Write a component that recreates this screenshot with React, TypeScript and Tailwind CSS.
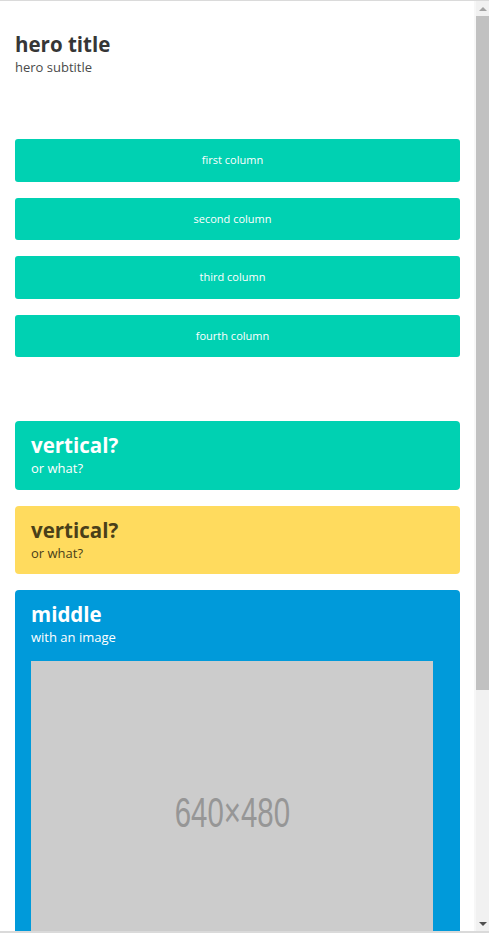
const font = { fontFamily: '"Open Sans", "Noto Sans", sans-serif' };

const columns = ["first column", "second column", "third column", "fourth column"];

function Tile({
  title,
  subtitle,
  className,
  children,
}: {
  title: string;
  subtitle: string;
  className: string;
  children?: React.ReactNode;
}) {
  return (
    <div className={`rounded-[4px] px-4 pt-[10px] pb-[16px] ${className}`}>
      <p className="text-[20.5px] font-bold leading-[28px]">{title}</p>
      <p className="text-[13px] leading-[18px]">{subtitle}</p>
      {children}
    </div>
  );
}

function Scrollbar() {
  return (
    <div className="flex w-[15px] flex-col border-l-2 border-[#f7f7f7] bg-[#f1f1f1]">
      <div className="flex h-[15px] items-center justify-center">
        <div className="h-0 w-0 border-x-[4px] border-b-[4px] border-x-transparent border-b-[#a3a3a3]" />
      </div>
      <div className="h-[674px] bg-[#c1c1c1]" />
      <div className="flex-1" />
      <div className="flex h-[15px] items-center justify-center">
        <div className="h-0 w-0 border-x-[4px] border-t-[4px] border-x-transparent border-t-[#505050]" />
      </div>
    </div>
  );
}

export default function App() {
  return (
    <div
      className="flex h-[933px] overflow-hidden border-t border-b-2 border-[#dadada] bg-white text-[#363636]"
      style={font}
    >
      <main className="flex-1 overflow-hidden pl-[15px] pr-[14px]">
        <section className="pt-[29px]">
          <h1 className="text-[20.5px] font-bold leading-[28px]">hero title</h1>
          <h2 className="text-[13px] leading-[18px] text-[#4a4a4a]">hero subtitle</h2>
        </section>

        <section className="mt-[63px] flex flex-col gap-[16px]">
          {columns.map((c) => (
            <div
              key={c}
              className="flex h-[42.6px] items-center justify-center rounded-[3px] bg-[#00d1b2] pr-[10px] text-[11px] text-white"
            >
              {c}
            </div>
          ))}
        </section>

        <section className="mt-[64px] flex flex-col gap-[16px] pb-[40px]">
          <Tile title="vertical?" subtitle="or what?" className="h-[69px] bg-[#00d1b2] text-white" />
          <Tile
            title="vertical?"
            subtitle="or what?"
            className="h-[68px] bg-[#ffdb5e] text-[#4a4019]"
          />
          <Tile title="middle" subtitle="with an image" className="bg-[#009ada] text-white">
            <div className="mt-[15px] flex h-[302px] w-[402px] items-center justify-center bg-[#cccccc]">
              <span
                className="inline-block scale-x-[0.7] text-[42px] text-[#969696]"
                style={{ fontFamily: '"Liberation Sans", Arial, sans-serif' }}
              >
                640×480
              </span>
            </div>
          </Tile>
        </section>
      </main>
      <Scrollbar />
    </div>
  );
}
